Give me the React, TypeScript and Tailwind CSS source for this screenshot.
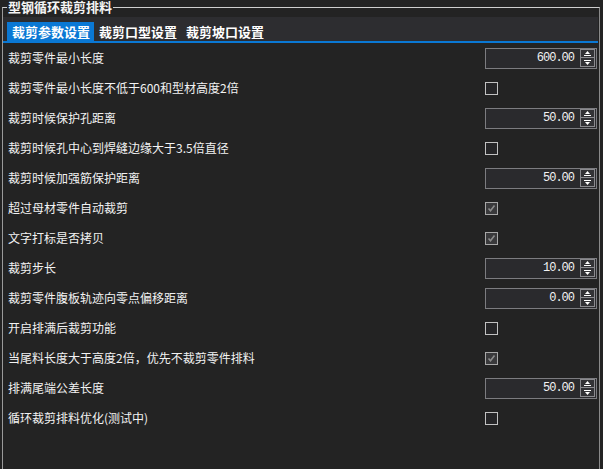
import React from "react";

type Row =
  | { label: string; kind: "spin"; value: string }
  | { label: string; kind: "check"; checked: boolean };

const rows: Row[] = [
  { label: "裁剪零件最小长度", kind: "spin", value: "600.00" },
  { label: "裁剪零件最小长度不低于600和型材高度2倍", kind: "check", checked: false },
  { label: "裁剪时候保护孔距离", kind: "spin", value: "50.00" },
  { label: "裁剪时候孔中心到焊缝边缘大于3.5倍直径", kind: "check", checked: false },
  { label: "裁剪时候加强筋保护距离", kind: "spin", value: "50.00" },
  { label: "超过母材零件自动裁剪", kind: "check", checked: true },
  { label: "文字打标是否拷贝", kind: "check", checked: true },
  { label: "裁剪步长", kind: "spin", value: "10.00" },
  { label: "裁剪零件腹板轨迹向零点偏移距离", kind: "spin", value: "0.00" },
  { label: "开启排满后裁剪功能", kind: "check", checked: false },
  { label: "当尾料长度大于高度2倍，优先不裁剪零件排料", kind: "check", checked: true },
  { label: "排满尾端公差长度", kind: "spin", value: "50.00" },
  { label: "循环裁剪排料优化(测试中)", kind: "check", checked: false },
];

function SpinBox({ value }: { value: string }) {
  return (
    <div className="w-[112px] h-[21px] border border-[#7c7c80] bg-[#2a2a2d] flex items-center">
      <div className="flex-1 text-right pr-[6px] text-[12px] leading-[19px] tracking-[-1px] text-[#f2f2f2] font-['Liberation_Mono',monospace]">
        {value}
      </div>
      <div className="flex flex-col mr-[1px]">
        <div className="w-[15px] h-[9px] border border-[#8a8a8e] bg-[#323235] flex items-center justify-center">
          <svg width="7" height="5" viewBox="0 0 7 5">
            <path d="M3.5 0 L6 3 L1 3 Z" fill="#ffffff" />
            <rect x="0" y="4" width="7" height="1" fill="#ffffff" />
          </svg>
        </div>
        <div className="w-[15px] h-[9px] border border-t-0 border-[#8a8a8e] bg-[#323235] flex items-center justify-center">
          <svg width="7" height="5" viewBox="0 0 7 5">
            <rect x="0" y="0" width="7" height="1" fill="#ffffff" />
            <path d="M1 2 L6 2 L3.5 5 Z" fill="#ffffff" />
          </svg>
        </div>
      </div>
    </div>
  );
}

function CheckBox({ checked }: { checked: boolean }) {
  return (
    <div
      className={
        checked
          ? "w-[13px] h-[13px] border border-[#a8a8a8] bg-[#3a3a3c] flex items-center justify-center"
          : "w-[13px] h-[13px] border border-[#c2c2c2] bg-[#262628]"
      }
    >
      {checked && (
        <svg width="9" height="9" viewBox="0 0 9 9">
          <path d="M1.5 4.5 L3.5 6.8 L7.5 1.5" stroke="#8c8c8c" strokeWidth="1.6" fill="none" />
        </svg>
      )}
    </div>
  );
}

export default function App() {
  const tabs = ["裁剪参数设置", "裁剪口型设置", "裁剪坡口设置"];
  return (
    <div className="w-[603px] h-[469px] bg-[#232323] pt-[7px] pl-[2px] pr-[3px] overflow-hidden font-['Noto_Sans_CJK_SC',sans-serif]">
      <div className="relative h-[470px] border-t border-l border-r border-t-[#cfcfcf] border-l-[#9a9a9a] border-r-[#8a8a8a] pt-[9px]">
        <div className="absolute left-[4px] top-[-8px] px-[1px] bg-[#232323] text-[13px] leading-[13px] font-bold text-[#f4f4f4]">
          型钢循环裁剪排料
        </div>
        <div className="h-[24px] bg-[#2d2d30] flex items-end pl-[4px] mr-[1px]">
          {tabs.map((t, i) => (
            <div
              key={t}
              className={
                i === 0
                  ? "w-[87px] h-[19px] bg-[#0a78d4] pl-[5px] text-[13px] leading-[19px] font-bold text-white"
                  : "w-[87px] h-[19px] pl-[5px] text-[13px] leading-[19px] font-bold text-white"
              }
            >
              {t}
            </div>
          ))}
        </div>
        <div className="h-[2px] bg-[#0a78d4] mr-[1px]" />
        <div className="flex flex-col">
          {rows.map((r) => (
            <div key={r.label} className="h-[30px] flex items-center pl-[5px] pr-[2px]">
              <div className="flex-1 text-[12px] leading-[14px] text-[#f2f2f2]">{r.label}</div>
              <div className="w-[112px] flex items-center">
                {r.kind === "spin" ? <SpinBox value={r.value} /> : <CheckBox checked={r.checked} />}
              </div>
            </div>
          ))}
        </div>
      </div>
    </div>
  );
}
